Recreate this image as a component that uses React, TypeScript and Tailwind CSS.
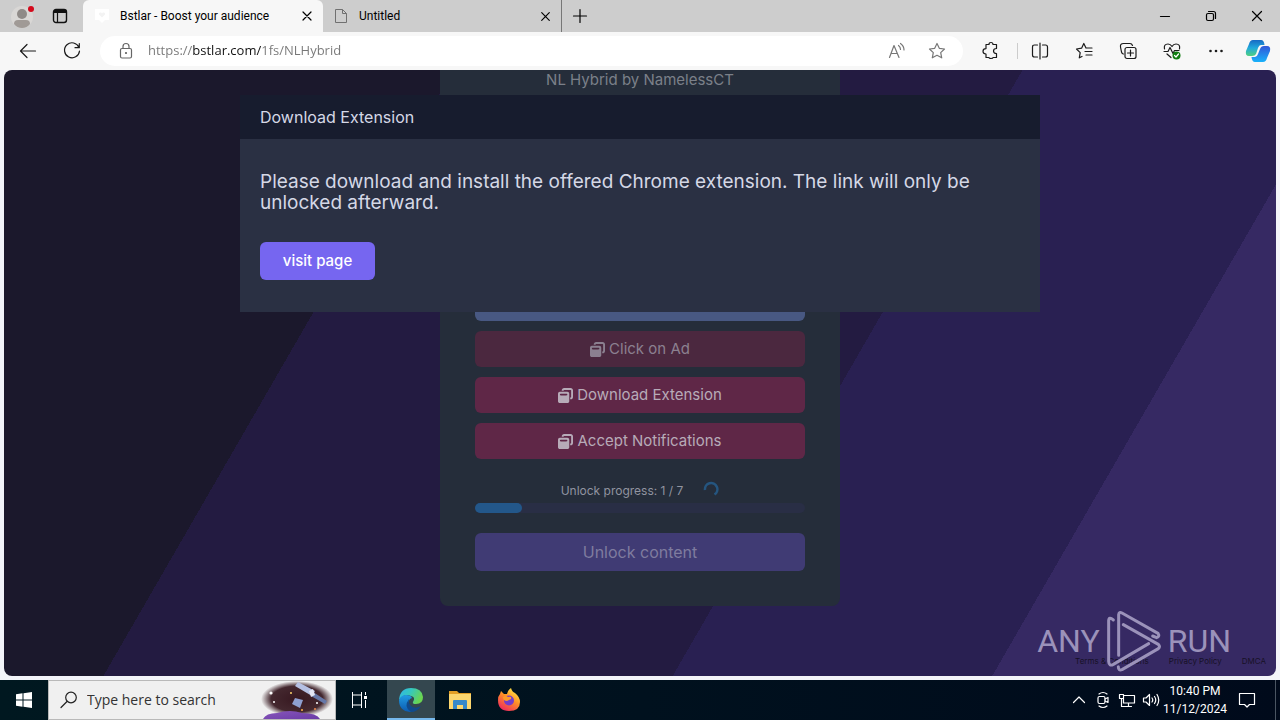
import type { ReactNode } from "react";
import { FaWindowRestore } from "react-icons/fa6";

interface IconProps {
  size?: number;
  className?: string;
  children: ReactNode;
}

function Icon({ size = 20, className = "", children }: IconProps) {
  return (
    <svg
      width={size}
      height={size}
      viewBox="0 0 20 20"
      fill="none"
      stroke="currentColor"
      strokeWidth="1.2"
      strokeLinecap="round"
      strokeLinejoin="round"
      className={`shrink-0 ${className}`}
      aria-hidden="true"
    >
      {children}
    </svg>
  );
}

function CloseIcon({ size = 20 }: { size?: number }) {
  return (
    <Icon size={size}>
      <path d="M6 6l8 8M14 6l-8 8" />
    </Icon>
  );
}

interface BarButtonProps {
  label: string;
  className?: string;
  children: ReactNode;
}

function BarButton({ label, className = "w-11", children }: BarButtonProps) {
  return (
    <button aria-label={label} className={`flex h-full shrink-0 items-center justify-center ${className}`}>
      {children}
    </button>
  );
}

function TabStrip() {
  return (
    <div className="flex h-8 shrink-0 bg-[#cdcdcd] font-['Roboto',sans-serif] text-xs text-black">
      <BarButton label="Profile" className="w-11">
        <svg width="24" height="28" viewBox="0 0 24 28" aria-hidden="true">
          <circle cx="12" cy="15" r="11" fill="#d9d7d5" />
          <circle cx="12" cy="12" r="5" fill="#8f8a87" />
          <path d="M4 22q0-4 4-4h8q4 0 4 4-3 4-8 4t-8-4z" fill="#a09a96" />
          <circle cx="21" cy="7" r="3" fill="#d40a1c" />
        </svg>
      </BarButton>
      <BarButton label="Tab actions" className="w-8">
        <svg width="16" height="16" viewBox="0 0 16 16" fill="none" stroke="#111" aria-hidden="true">
          <rect x="1.5" y="1.5" width="13" height="13" rx="2.5" strokeWidth="1.4" />
          <path d="M2 3.5h12" strokeWidth="3" />
          <path d="M5.5 5v9" strokeWidth="1.2" />
        </svg>
      </BarButton>
      <div className="ml-[7px] flex w-60 items-center gap-2.5 rounded-t-md bg-[#f7f7f7] pr-1.5 pl-[11px]">
        <svg width="16" height="16" viewBox="0 0 16 16" fill="#fff" className="shrink-0" aria-hidden="true">
          <path d="M1 1h14v11h-4l-3 3-3-3H1z" />
          <path d="M8 9.500l-3-3a1.500 1.500 0 013-1 1.500 1.500 0 013 1z" fill="#f3f3f3" />
        </svg>
        <span className="flex-1 truncate">Bstlar - Boost your audience</span>
        <button aria-label="Close tab">
          <CloseIcon />
        </button>
      </div>
      <div className="flex w-[239px] items-center gap-2.5 rounded-bl-md border-r border-[#777] bg-clip-padding pr-1.5 pl-2.5">
        <svg width="16" height="16" viewBox="0 0 16 16" fill="none" stroke="#707070" className="shrink-0" aria-hidden="true">
          <path d="M2.500 1.500h7l4 4v9h-11zM9.500 1.500v4h4" strokeLinejoin="round" />
        </svg>
        <span className="flex-1 truncate">Untitled</span>
        <button aria-label="Close tab">
          <CloseIcon size={19} />
        </button>
      </div>
      <BarButton label="New tab" className="w-9">
        <Icon>
          <path d="M10 3.500v13M3.500 10h13" />
        </Icon>
      </BarButton>
      <div className="flex-1" />
      <BarButton label="Minimize" className="w-[46px]">
        <Icon>
          <path d="M5.500 10.500h9" />
        </Icon>
      </BarButton>
      <BarButton label="Restore" className="w-[46px]">
        <Icon>
          <rect x="5.500" y="7.500" width="7" height="7" rx="1.500" />
          <path d="M7.500 5.500h5q2 0 2 2v5" />
        </Icon>
      </BarButton>
      <BarButton label="Close" className="w-[46px]">
        <Icon>
          <path d="M5.500 5.500l9 9M14.500 5.500l-9 9" />
        </Icon>
      </BarButton>
    </div>
  );
}

function Toolbar() {
  return (
    <div className="flex h-[38px] shrink-0 items-center bg-[#f7f7f7] pr-0.5 pl-1.5 text-[#1b1b1b]">
      <BarButton label="Back">
        <Icon>
          <path d="M17.500 10H2.500M9 3.500L2.500 10 9 16.500" />
        </Icon>
      </BarButton>
      <BarButton label="Refresh">
        <Icon>
          <path d="M17 6.500A7.500 7.500 0 1017.500 10M17.300 2.500v4.200H13" />
        </Icon>
      </BarButton>
      <div className="mx-1.5 flex h-[30px] min-w-0 flex-1 items-center rounded-full bg-white px-4">
        <Icon className="text-[#666]">
          <rect x="4.500" y="7.500" width="11" height="9.500" rx="1.500" />
          <path d="M7 7.500V5.500a3 3 0 016 0v2" />
          <circle cx="10" cy="12" r=".5" fill="currentColor" />
        </Icon>
        <input
          aria-label="Address"
          readOnly
          value="https://bstlar.com/1fs/NLHybrid"
          className="ml-3 min-w-0 flex-1 bg-[linear-gradient(90deg,#777_44px,#111_44px,#111_113px,#777_113px)] bg-clip-text text-[13px] text-transparent outline-none"
        />
        <button aria-label="Read aloud" className="mr-5 text-[#777]">
          <Icon>
            <path d="M2.500 16.500L7 4.500l5 12M4 12.500h6.200M11.500 4.500q2 1.500 2 4M13.500 2.500q3.500 2.500 3.500 6.500" />
          </Icon>
        </button>
        <button aria-label="Add to favorites" className="text-[#777]">
          <Icon>
            <path d="M10 2.500l2.300 4.800 5.200.7-3.800 3.600 1 5.200L10 14.300l-4.700 2.500 1-5.200L2.500 8l5.200-.7z" />
          </Icon>
        </button>
      </div>
      <BarButton label="Extensions">
        <Icon>
          <path d="M5 3.500h3q0-2 2-2t2 2h3.500v4q-3 0-3 2.500t3 2.500v4H12q0 1-2 1t-2-1H5V13q-3 0-3-2.700t3-2.700z" />
        </Icon>
      </BarButton>
      <div className="ml-1 h-4 w-px bg-[#ccc]" />
      <BarButton label="Split screen">
        <Icon>
          <path d="M7.500 4H4.500q-2 0-2 2v8q0 2 2 2h3M12.500 4h3q2 0 2 2v8q0 2-2 2h-3M10 2v16" />
        </Icon>
      </BarButton>
      <BarButton label="Favorites">
        <Icon>
          <path d="M12 7l-2.200-4.500-2.200 4.700-5.100.8 3.700 3.600-.9 5.200L8 15.500M12 7h6M11 10.500h7M12 14h6" />
        </Icon>
      </BarButton>
      <BarButton label="Collections">
        <Icon>
          <rect x="7" y="6.500" width="11" height="11" rx="2" />
          <path d="M12.500 9v6M9.500 12h6M14.500 4.500q-.7-2-2.500-2H5.500Q2 2.500 2.500 6l1 5q.5 2 2 2" />
        </Icon>
      </BarButton>
      <BarButton label="Browser essentials">
        <Icon>
          <path d="M2.500 8Q1.500 3 6 3q2.500 0 4 2.500Q11.500 3 14 3q4.500 0 3.500 5M2 10.500h4l2-4 3 6 1.500-3H17M5 13l4 3.500" />
          <circle cx="14.500" cy="14.500" r="4" fill="#107c10" stroke="none" />
          <path d="M12.500 14.500l1.500 1.500 2.500-3" stroke="#fff" />
        </Icon>
      </BarButton>
      <BarButton label="Settings and more">
        <Icon>
          <g fill="currentColor" stroke="none">
            <circle cx="4.500" cy="10" r="1.300" />
            <circle cx="10" cy="10" r="1.300" />
            <circle cx="15.500" cy="10" r="1.300" />
          </g>
        </Icon>
      </BarButton>
      <BarButton label="Copilot" className="w-10">
        <svg width="26" height="24" viewBox="0 0 26 24" aria-hidden="true">
          <defs>
            <linearGradient id="copilotA" x1="0" y1="0" x2="0" y2="1">
              <stop offset="0" stopColor="#1769c4" />
              <stop offset=".5" stopColor="#21a9dc" />
              <stop offset="1" stopColor="#4fd07f" />
            </linearGradient>
            <linearGradient id="copilotB" x1="0" y1="0" x2="0" y2="1">
              <stop offset="0" stopColor="#3156d8" />
              <stop offset="1" stopColor="#19b2fa" />
            </linearGradient>
          </defs>
          <path d="M8 1h8q3 0 3.500 5H16q-2 0-3 3l-2 6q-1 2-4 2H4q-4 0-3-5L4 5q1-4 4-4z" fill="url(#copilotA)" />
          <path d="M19 7h3q4 0 3 5l-3 7q-1 4-4 4h-8q-3 0-3.500-5H10q2 0 3-3l2-5q1-3 4-3z" fill="url(#copilotB)" />
        </svg>
      </BarButton>
    </div>
  );
}

const tasks = [
  { label: "Click on Ad", style: "bg-[#4b283f] text-[#8b8090]" },
  { label: "Download Extension", style: "bg-[#5f2747] text-[#b7abb8]" },
  { label: "Accept Notifications", style: "bg-[#5f2747] text-[#b7abb8]" },
];

function UnlockCard() {
  return (
    <section className="mx-auto flex w-full max-w-[400px] flex-col rounded-b-lg bg-[#252d3a] px-[35px] pb-[35px] text-[15px] leading-5">
      <h1 className="text-center text-[#7b8089]">NL Hybrid by NamelessCT</h1>
      <div className="mt-[195px] flex flex-col gap-2.5">
        <button aria-label="Visit site" className="h-9 rounded-md bg-[#485882]" />
        {tasks.map((task) => (
          <button key={task.label} className={`flex h-9 items-center justify-center gap-1 rounded-md ${task.style}`}>
            <FaWindowRestore size={15} aria-hidden="true" />
            {task.label}
          </button>
        ))}
      </div>
      <div className="mt-5 flex h-5 items-center justify-center gap-5 text-xs text-[#9194a0]">
        <label htmlFor="unlock-progress" className="pt-1">
          Unlock progress: 1 / 7
        </label>
        <svg width="16" height="16" viewBox="0 0 16 16" fill="none" aria-hidden="true">
          <path d="M2 9A6.200 6.200 0 1111.500 13.500" stroke="#25557f" strokeWidth="2.500" />
        </svg>
      </div>
      <div id="unlock-progress" className="mt-1 h-2.5 rounded-full bg-[#292e45]">
        <div className="h-full rounded-full bg-[#23578a]" style={{ width: `${(1 / 7) * 100}%` }} />
      </div>
      <button className="mt-5 h-[38px] rounded-md bg-[#403b74] text-[#7f7c9f] text-base">Unlock content</button>
    </section>
  );
}

function ExtensionModal() {
  return (
    <div
      role="dialog"
      aria-labelledby="modal-title"
      className="absolute top-[25px] left-1/2 w-full max-w-[800px] -translate-x-1/2 bg-[#2a3043] text-[#d5d8e6]"
    >
      <h2 id="modal-title" className="flex h-11 items-center bg-[#171c2e] px-5 text-base">
        Download Extension
      </h2>
      <div className="px-5 py-8">
        <p className="text-[19px] leading-[21px]">
          Please download and install the offered Chrome extension. The link will only be unlocked afterward.
        </p>
        <button className="mt-[29px] h-[38px] w-[115px] rounded-md bg-[#7666f0] text-[15px] font-medium text-white">
          visit page
        </button>
      </div>
    </div>
  );
}

function Watermark() {
  return (
    <div className="absolute right-[45px] bottom-1 flex items-center gap-1.5 font-['Liberation_Sans_Narrow','Roboto',sans-serif] text-[32px] leading-none text-[#9b92ba]">
      <span>ANY</span>
      <svg width="56" height="62" viewBox="28 18 168 186" fill="none" stroke="currentColor" strokeWidth="9" strokeLinecap="round" strokeLinejoin="round" aria-hidden="true">
        <path d="M50 48Q37 37 36 50V172Q37 188 50 181L156 119" />
        <path d="M66 154V32Q67 22 76 27L184 88Q190 98 180 101L168 96" />
        <path d="M80 62L185 121Q192 128 185 134L76 197Q65 201 65 188" />
      </svg>
      <span>RUN</span>
    </div>
  );
}

function BrowserPage() {
  return (
    <main className="relative mx-1 mb-1 min-h-0 flex-1 overflow-hidden rounded-lg bg-[linear-gradient(120deg,#1b182c_27.7%,#231b41_27.7%,#231b41_62.8%,#292052_62.8%,#292052_82.5%,#362963_82.5%)] font-['Inter',sans-serif]">
      <UnlockCard />
      <ExtensionModal />
      <footer className="absolute right-2.5 bottom-2.5 flex gap-5 text-[8px] leading-[10px] text-[#171126]">
        <a href="#terms">Terms & Conditions</a>
        <a href="#privacy">Privacy Policy</a>
        <a href="#dmca">DMCA</a>
      </footer>
      <Watermark />
    </main>
  );
}

function SearchHighlight() {
  return (
    <svg width="74" height="38" viewBox="0 0 74 38" className="shrink-0" aria-hidden="true">
      <defs>
        <radialGradient id="space">
          <stop offset="0" stopColor="#371820" />
          <stop offset=".72" stopColor="#44282f" />
          <stop offset="1" stopColor="#44282f" stopOpacity="0" />
        </radialGradient>
        <linearGradient id="planet" x1="0" y1="0" x2="1" y2="1">
          <stop offset="0" stopColor="#8756bb" />
          <stop offset="1" stopColor="#6a3ba6" />
        </linearGradient>
      </defs>
      <ellipse cx="36" cy="18" rx="36" ry="18" fill="url(#space)" />
      <path d="M2 38q3-6 14-6 13-4 25 0 15 0 18 6z" fill="url(#planet)" />
      <path d="M34 5l3-4 17 9-3 5z" fill="#b5c0e3" />
      <path d="M52 11l14 9-2 3-14-8z" fill="#6678a8" />
      <path d="M31 23l3-6 8 2-3 8z" fill="#8e9fd0" />
      <path d="M48 10l4-2 2 6-4 2z" fill="#e3e6f4" />
      <g fill="#fff">
        <circle cx="10" cy="12" r="1.600" />
        <circle cx="13" cy="21" r="1" />
        <circle cx="30" cy="12" r="1" fill="#ffd36b" />
        <circle cx="56" cy="22" r="1" />
        <circle cx="54" cy="28" r="1" fill="#ef8a4d" />
        <circle cx="41" cy="29" r="1" fill="#ffb04a" />
      </g>
    </svg>
  );
}

function EdgeLogo() {
  return (
    <svg width="24" height="24" viewBox="0 0 24 24" aria-hidden="true">
      <defs>
        <linearGradient id="edgeTop" x1="0" y1="0" x2="1" y2=".4">
          <stop offset="0" stopColor="#2fb5ec" />
          <stop offset=".5" stopColor="#36c8bd" />
          <stop offset="1" stopColor="#6ad551" />
        </linearGradient>
        <linearGradient id="edgeLeft" x1="0" y1="0" x2="0" y2="1">
          <stop offset="0" stopColor="#219ce3" />
          <stop offset="1" stopColor="#0c5ab0" />
        </linearGradient>
      </defs>
      <path d="M0 12Q1 0 12 0q11 0 12 9 0 7-7 7-4 0-3-2 3-5-2-6Q5 5 0 12z" fill="url(#edgeTop)" />
      <path d="M0 12q2-5 7-5 5 0 6 3-4 1-3 6 2 5 8 5-3 3-7 3Q0 23 0 12z" fill="url(#edgeLeft)" />
      <path d="M10 11q-6 8 2 13 6 0 10-6-7 4-11-1-2-3-1-6z" fill="#114a8b" />
    </svg>
  );
}

function FolderLogo() {
  return (
    <svg width="22" height="20" viewBox="0 0 22 20" aria-hidden="true">
      <path d="M0 1h8l2 2h12v6H0z" fill="#e39f25" />
      <path d="M0 4h22v15H0z" fill="#fcd66e" />
      <path d="M4 19v-8q0-1 1-1h12q1 0 1 1v8h-4v-4H8v4z" fill="#3688c9" />
    </svg>
  );
}

function FirefoxLogo() {
  return (
    <svg width="24" height="24" viewBox="0 0 24 24" aria-hidden="true">
      <defs>
        <linearGradient id="fox" x1=".8" y1="0" x2=".2" y2="1">
          <stop offset="0" stopColor="#fff04a" />
          <stop offset=".45" stopColor="#ff9126" />
          <stop offset="1" stopColor="#ee2262" />
        </linearGradient>
      </defs>
      <path d="M3 6l1-3 3 3 3 0q0-3 4-6 1 4 4 5 5 4 5 9 0 9-11 9Q1 23 1 12q0-4 2-6z" fill="url(#fox)" />
      <circle cx="12" cy="12.500" r="5" fill="#743dc9" />
      <path d="M6 9q3-2 5 0 4-1 3 2l-4 2q-4 0-4-4z" fill="#ff9b28" />
    </svg>
  );
}

function Taskbar() {
  return (
    <footer className="flex h-10 shrink-0 items-stretch bg-linear-to-r from-[#001820] via-[#00111e] to-[#000a1b] text-white">
      <BarButton label="Start" className="w-12">
        <svg width="16" height="16" viewBox="0 0 16 16" fill="#fff" aria-hidden="true">
          <path d="M0 2.300l6.500-1v6.200H0zM7.500 1.200L16 0v7.500H7.500zM0 8.500h6.500v6.200l-6.500-1zM7.500 8.500H16V16l-8.500-1.200z" />
        </svg>
      </BarButton>
      <label className="flex w-72 items-center border border-[#b9b9b9] bg-[#f0f0f0] pl-2.5 text-[#222]">
        <Icon>
          <circle cx="12" cy="7.500" r="5.300" />
          <path d="M8 11.500L2 17.500" />
        </Icon>
        <input
          aria-label="Search"
          placeholder="Type here to search"
          className="ml-2 min-w-0 flex-1 text-sm outline-none placeholder:text-[#333]"
        />
        <SearchHighlight />
      </label>
      <BarButton label="Task view" className="w-[51px]">
        <svg width="18" height="18" viewBox="0 0 18 18" fill="none" stroke="#fff" className="mr-1" aria-hidden="true">
          <path d="M1.500 1v3h9V1M1.500 17v-3h9v3M1.500 4v10M10.500 4v10M14.500 1v3M14.500 9v8" />
          <path d="M13 5h3v3h-3z" fill="#fff" stroke="none" />
        </svg>
      </BarButton>
      <BarButton label="Microsoft Edge" className="w-12 border-b-2 border-[#76b9ed] bg-[#34474f] pt-0.5">
        <EdgeLogo />
      </BarButton>
      <BarButton label="File Explorer" className="w-[49px]">
        <FolderLogo />
      </BarButton>
      <BarButton label="Firefox" className="w-[49px]">
        <FirefoxLogo />
      </BarButton>
      <div className="flex-1" />
      <BarButton label="Show hidden icons" className="w-6">
        <Icon>
          <path d="M4.500 12.500L10 7l5.500 5.500" />
        </Icon>
      </BarButton>
      <BarButton label="Meet now" className="w-6">
        <Icon>
          <rect x="5" y="6.500" width="7" height="7" rx="1.500" />
          <path d="M12 9l3-1.500v5L12 11M6 4q4-3 8 0M6 16q4 3 8 0" />
        </Icon>
      </BarButton>
      <BarButton label="Network" className="w-6">
        <Icon>
          <path d="M7 5.500h10.500v7.500H6.500V9M8.500 16.500h6M11.500 13v3.500M2.500 4.500h4v4h-4zM4.500 8.500v8h4" />
        </Icon>
      </BarButton>
      <BarButton label="Volume" className="w-6">
        <Icon>
          <path d="M2.500 8h2.500l3.500-3.500v11L5 12H2.500zM11 8q1.500 2 0 4M13.500 6.500q2.500 3.500 0 7M16 4.500q3.500 5.500 0 11" />
        </Icon>
      </BarButton>
      <div className="flex w-16 flex-col items-center justify-center font-['Roboto',sans-serif] text-xs leading-[18px] whitespace-nowrap">
        <time>10:40 PM</time>
        <time>11/12/2024</time>
      </div>
      <BarButton label="Notifications" className="w-10">
        <Icon>
          <path d="M2.500 3.500h15v11h-5L10 17l-2.500-2.500h-5z" />
        </Icon>
      </BarButton>
      <div className="mr-1 ml-2 w-px bg-[#4a5562]" />
    </footer>
  );
}

export default function App() {
  return (
    <div className="flex h-screen flex-col overflow-hidden bg-[#f3f4f9] font-['Open_Sans',sans-serif]">
      <TabStrip />
      <Toolbar />
      <BrowserPage />
      <Taskbar />
    </div>
  );
}
